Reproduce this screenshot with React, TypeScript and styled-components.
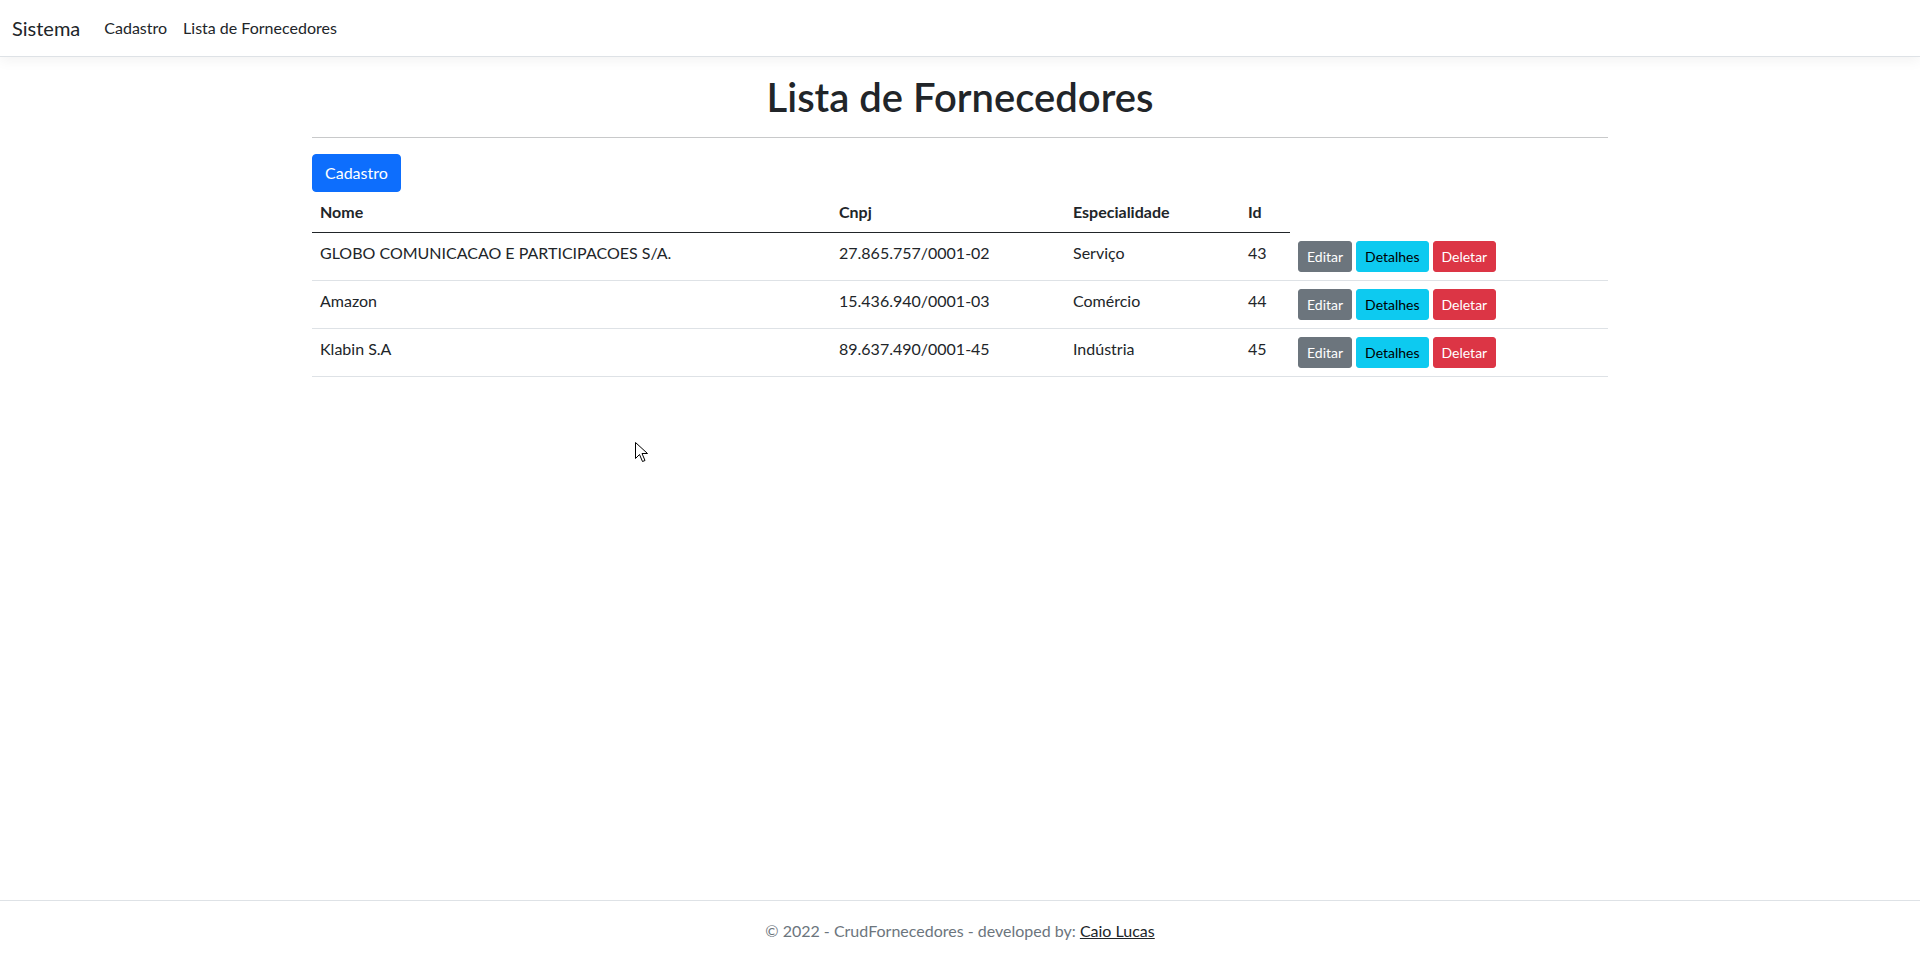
import React from "react";
import styled, { createGlobalStyle, css } from "styled-components";

const GlobalStyle = createGlobalStyle`
  *, *::before, *::after { box-sizing: border-box; }
  html, body { margin: 0; padding: 0; }
  body {
    font-family: Lato, "Open Sans", "Liberation Sans", sans-serif;
    font-size: 16px;
    line-height: 1.5;
    color: #212529;
    background: #fff;
  }
`;

const Page = styled.div`
  min-height: 100vh;
  display: flex;
  flex-direction: column;
  position: relative;
`;

const Navbar = styled.nav`
  display: flex;
  align-items: center;
  padding: 8px 12px;
  background: #fff;
  border-bottom: 1px solid #dee2e6;
  box-shadow: 0 4px 12px rgba(0, 0, 0, 0.05);
  margin-bottom: 16px;
`;

const Brand = styled.a`
  font-size: 20px;
  line-height: 30px;
  padding: 5px 0;
  margin-right: 16px;
  color: #212529;
  text-decoration: none;
  white-space: nowrap;
`;

const NavList = styled.ul`
  display: flex;
  list-style: none;
  margin: 0;
  padding: 0;
`;

const NavLink = styled.a`
  display: block;
  padding: 8px;
  color: #212529;
  text-decoration: none;
  line-height: 24px;
`;

const Container = styled.main`
  width: 1296px;
  margin: 0 auto;
  padding-bottom: 16px;
`;

const Title = styled.h1`
  margin: 0 0 8px;
  text-align: center;
  font-size: 40px;
  font-weight: 600;
  line-height: 48px;
`;

const Rule = styled.hr`
  margin: 16px 0;
  border: 0;
  border-top: 1px solid #c8c9ca;
`;

type Variant = "primary" | "secondary" | "info" | "danger";

const variants: Record<Variant, ReturnType<typeof css>> = {
  primary: css`background: #0d6efd; border-color: #0d6efd; color: #fff;`,
  secondary: css`background: #6c757d; border-color: #6c757d; color: #fff;`,
  info: css`background: #0dcaf0; border-color: #0dcaf0; color: #000;`,
  danger: css`background: #dc3545; border-color: #dc3545; color: #fff;`,
};

const Button = styled.a<{ $variant: Variant; $small?: boolean }>`
  display: inline-block;
  border: 1px solid transparent;
  text-decoration: none;
  cursor: pointer;
  white-space: nowrap;
  ${(p) => variants[p.$variant]}
  ${(p) =>
    p.$small
      ? css`
          padding: 4px 8px;
          font-size: 14px;
          line-height: 21px;
          border-radius: 3px;
        `
      : css`
          padding: 6px 12px;
          font-size: 16px;
          line-height: 24px;
          border-radius: 4px;
        `}
`;

const Toolbar = styled.div`
  display: flex;
`;

const Table = styled.table`
  width: 100%;
  table-layout: fixed;
  border-collapse: collapse;
  margin-bottom: 16px;
  vertical-align: top;
`;

const HeadCell = styled.th`
  text-align: left;
  font-weight: 700;
  padding: 8px;
  line-height: 24px;
  border-bottom: 1px solid #212529;
`;

const Cell = styled.td`
  padding: 8px;
  line-height: 24px;
  vertical-align: top;
  border-bottom: 1px solid #dee2e6;
  white-space: nowrap;
`;

const Actions = styled.div`
  display: flex;
  gap: 4px;
`;

const Footer = styled.footer`
  margin-top: auto;
  border-top: 1px solid #dee2e6;
  line-height: 60px;
  color: #6c757d;
  text-align: center;
  white-space: nowrap;
`;

const FooterLink = styled.a`
  color: #212529;
  text-decoration: underline;
`;

const Cursor = styled.svg`
  position: absolute;
  left: 635px;
  top: 442px;
  pointer-events: none;
`;

const fornecedores = [
  { nome: "GLOBO COMUNICACAO E PARTICIPACOES S/A.", cnpj: "27.865.757/0001-02", esp: "Serviço", id: 43 },
  { nome: "Amazon", cnpj: "15.436.940/0001-03", esp: "Comércio", id: 44 },
  { nome: "Klabin S.A", cnpj: "89.637.490/0001-45", esp: "Indústria", id: 45 },
];

export default function App() {
  return (
    <Page>
      <GlobalStyle />
      <Navbar>
        <Brand href="#">Sistema</Brand>
        <NavList>
          <li><NavLink href="#">Cadastro</NavLink></li>
          <li><NavLink href="#">Lista de Fornecedores</NavLink></li>
        </NavList>
      </Navbar>
      <Container>
        <Title>Lista de Fornecedores</Title>
        <Rule />
        <Toolbar>
          <Button $variant="primary" href="#">Cadastro</Button>
        </Toolbar>
        <Table>
          <colgroup>
            <col style={{ width: 519 }} />
            <col style={{ width: 234 }} />
            <col style={{ width: 175 }} />
            <col style={{ width: 50 }} />
            <col />
          </colgroup>
          <thead>
            <tr>
              <HeadCell>Nome</HeadCell>
              <HeadCell>Cnpj</HeadCell>
              <HeadCell>Especialidade</HeadCell>
              <HeadCell>Id</HeadCell>
            </tr>
          </thead>
          <tbody>
            {fornecedores.map((f) => (
              <tr key={f.id}>
                <Cell>{f.nome}</Cell>
                <Cell>{f.cnpj}</Cell>
                <Cell>{f.esp}</Cell>
                <Cell>{f.id}</Cell>
                <Cell>
                  <Actions>
                    <Button $variant="secondary" $small href="#">Editar</Button>
                    <Button $variant="info" $small href="#">Detalhes</Button>
                    <Button $variant="danger" $small href="#">Deletar</Button>
                  </Actions>
                </Cell>
              </tr>
            ))}
          </tbody>
        </Table>
      </Container>
      <Footer>
        © 2022 - CrudFornecedores - developed by: <FooterLink href="#">Caio Lucas</FooterLink>
      </Footer>
      <Cursor width="13" height="21" viewBox="0 0 13 21">
        <path d="M0.5 0.5 L0.5 16.5 L4.5 12.5 L7.5 19.5 L10 18.5 L7 11.5 L12.5 11.5 Z" fill="#fff" stroke="#000" strokeWidth="1" strokeLinejoin="miter" />
      </Cursor>
    </Page>
  );
}
